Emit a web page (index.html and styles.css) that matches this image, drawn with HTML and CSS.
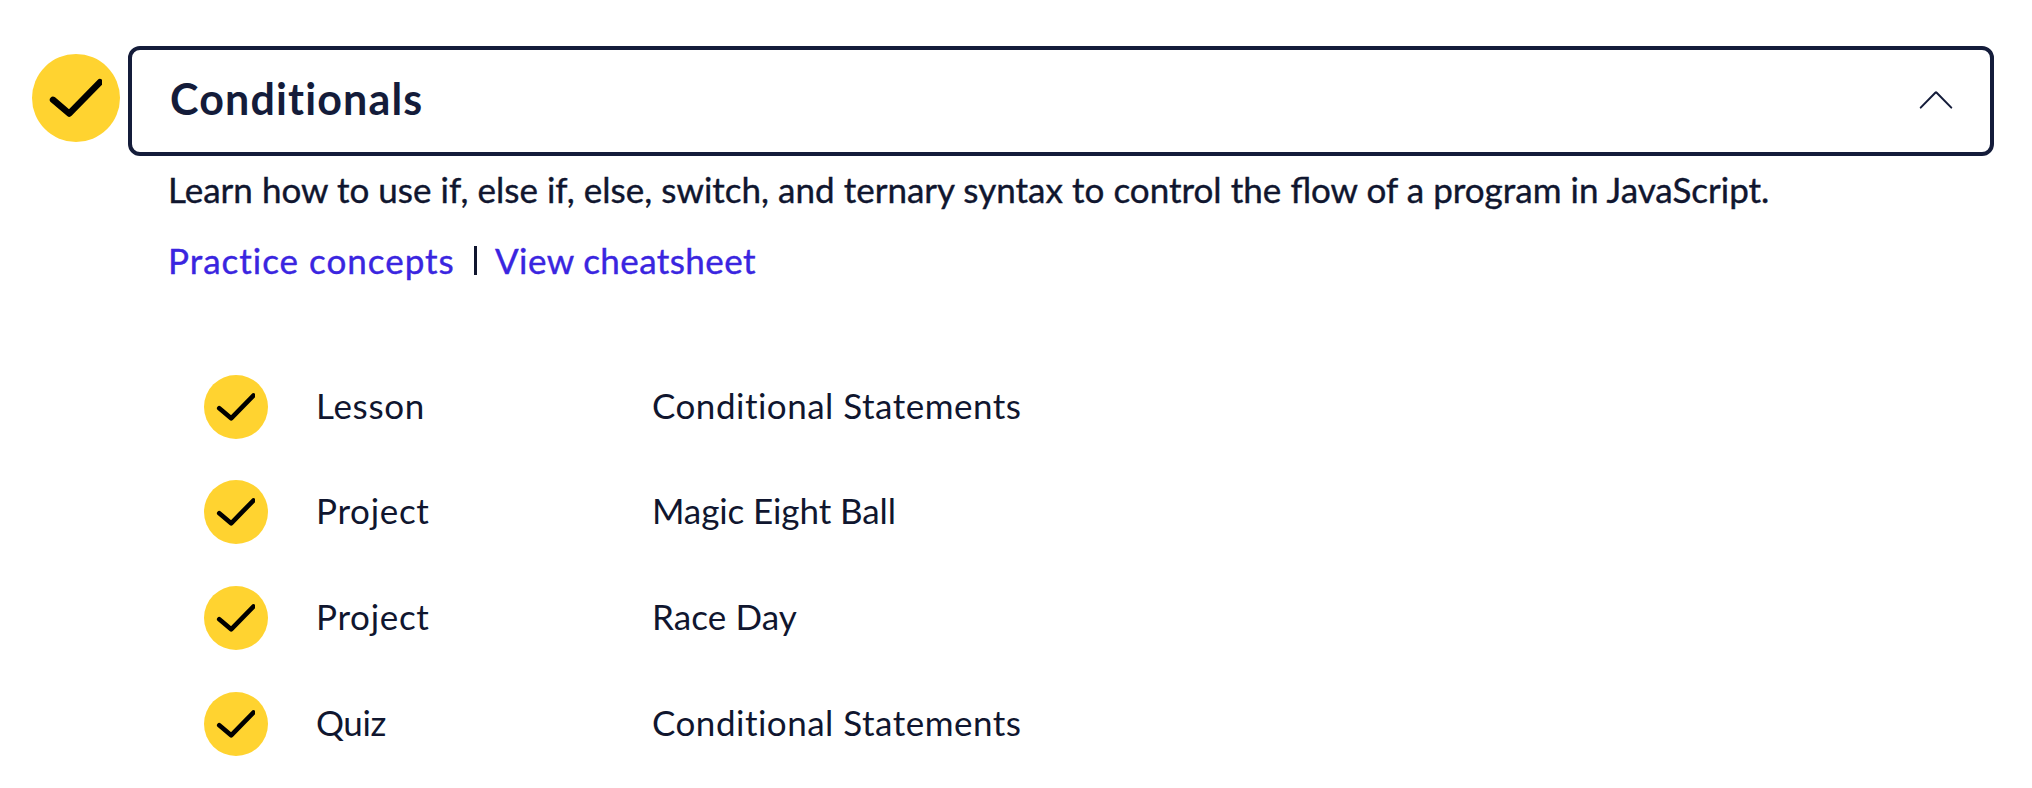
FILE: index.html
```html
<!DOCTYPE html>
<html lang="en">
<head>
<meta charset="utf-8">
<title>Conditionals</title>
<link rel="stylesheet" href="styles.css">
</head>
<body>
<svg class="defs" width="0" height="0" aria-hidden="true">
  <symbol id="check" viewBox="0 0 88 88">
    <circle cx="44" cy="44" r="44" fill="#ffd330"/>
    <svg x="0" y="0" width="70" height="88" viewBox="0 0 70 88">
      <path d="M21 45.8 37.3 59.6 67.9 28.2" fill="none" stroke="#000" stroke-width="6.4" stroke-linecap="round" stroke-linejoin="round"/>
    </svg>
  </symbol>
</svg>
<main class="module">
  <header class="module-head">
    <svg class="badge-large"><use href="#check"/></svg>
    <button class="toggle">
      <span class="toggle-title">Conditionals</span>
      <svg class="chevron" viewBox="0 0 34 20"><path d="M1.7 17.6 16.3 2.7Q17 2 17.7 2.7L32.3 17.6" fill="none" stroke="#141c3a" stroke-width="2" stroke-linecap="round"/></svg>
    </button>
  </header>
  <section class="summary">
    <p class="description">Learn how to use if, else if, else, switch, and ternary syntax to control the flow of a program in JavaScript.</p>
    <nav class="links"><a class="link practice">Practice concepts</a><span class="divider"></span><a class="link cheatsheet">View cheatsheet</a></nav>
  </section>
  <ul class="items">
    <li class="item"><svg class="badge"><use href="#check"/></svg><span class="kind">Lesson</span><span class="name statements">Conditional Statements</span></li>
    <li class="item"><svg class="badge"><use href="#check"/></svg><span class="kind">Project</span><span class="name magic">Magic Eight Ball</span></li>
    <li class="item"><svg class="badge"><use href="#check"/></svg><span class="kind">Project</span><span class="name race">Race Day</span></li>
    <li class="item"><svg class="badge"><use href="#check"/></svg><span class="kind quiz">Quiz</span><span class="name statements">Conditional Statements</span></li>
  </ul>
</main>
</body>
</html>
```
FILE: styles.css
```css
* { box-sizing: border-box; }
body {
  margin: 0;
  background: #fff;
  color: #10162f;
  font: 35px/52px Lato, "Open Sans", sans-serif;
  white-space: nowrap;
}
.defs { display: block; }
.module { padding: 46px 38px 0 32px; height: 788px; overflow: hidden; }
.module-head { display: flex; gap: 8px; height: 110px; }
.badge-large { width: 88px; height: 88px; margin-top: 8px; flex: none; }
.toggle {
  flex: 1;
  display: flex;
  align-items: center;
  justify-content: space-between;
  padding: 0 37px 0 38px;
  border: 4px solid #141c3a;
  border-radius: 12px;
  background: #fff;
  color: #141c3a;
  font: 700 43px/60px Lato, "Open Sans", sans-serif;
}
.toggle-title { padding-bottom: 4px; letter-spacing: 1.15px; }
.chevron { width: 34px; height: 20px; margin-bottom: 2px; }
.summary { padding: 7px 0 0 136px; }
.description { margin: 0; word-spacing: 0.15px; -webkit-text-stroke: 0.4px; }
.links { display: flex; align-items: center; margin-top: 19px; height: 52px; -webkit-text-stroke: 0.4px; }
.link { color: #3a25e0; }
.practice { width: 306px; letter-spacing: 1px; }
.divider { width: 3px; height: 29px; background: #10162f; }
.cheatsheet { margin-left: 18px; letter-spacing: 0.42px; }
.items { list-style: none; margin: 88.67px 0 0; padding: 0 0 0 172px; display: grid; grid-auto-rows: 64px; row-gap: 41.67px; }
.item { display: grid; grid-template-columns: 64px 288px 1fr; column-gap: 48px; align-items: center; }
.badge { width: 64px; height: 64px; }
.kind { padding-bottom: 4px; letter-spacing: 0.7px; }
.kind.quiz { letter-spacing: -0.4px; }
.name { padding-bottom: 4px; }
.statements { letter-spacing: 0.5px; }
.magic { letter-spacing: -0.1px; }
.race { letter-spacing: 0.1px; }
```
